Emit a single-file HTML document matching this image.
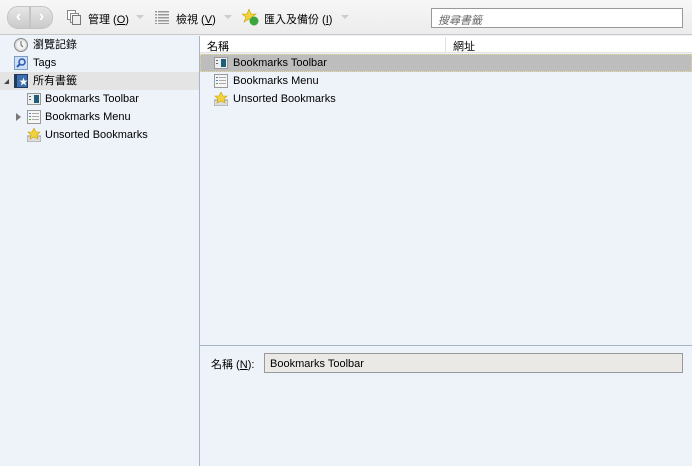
<!DOCTYPE html>
<html><head><meta charset="utf-8"><style>
*{margin:0;padding:0;box-sizing:border-box}
body{width:692px;height:466px;overflow:hidden;position:relative;font-family:"Liberation Sans","Noto Sans CJK TC",sans-serif;font-size:11px;color:#000;background:#eef3fa}
#tb{position:absolute;left:0;top:0;width:692px;height:35px;background:linear-gradient(#f7f7f7,#ececec);border-bottom:1px solid #c8c8c8}
.nav{position:absolute;top:6px;width:23px;height:23px;border:1px solid #c4c4c4;background:linear-gradient(#e6e6e6,#cacaca);color:#fff;font-weight:bold;font-size:16px;text-align:center;line-height:20px}
.tbi{position:absolute;top:11px;font-size:11px}
.dd{position:absolute;top:15px;width:0;height:0;border-left:4px solid transparent;border-right:4px solid transparent;border-top:4px solid #ccc}
#search{position:absolute;left:431px;top:8px;width:252px;height:20px;border:1px solid #999;background:#fff;font-style:italic;color:#666;padding:3px 6px;font-size:11px}
#side{position:absolute;left:0;top:36px;width:200px;height:430px;background:#eef3fa;border-right:1px solid #a9b5c6}
.row{position:absolute;height:18px;line-height:19px;white-space:nowrap}
.ic{position:absolute;top:2px;width:14px;height:14px}
#main{position:absolute;left:200px;top:36px;width:492px;height:310px;background:#eef3fa}
#hdr{position:absolute;left:0;top:0;width:492px;height:17px;background:#fff;border-bottom:1px solid #e3e3e3}
#det{position:absolute;left:200px;top:345px;width:492px;height:121px;border-top:1px solid #a9b5c6;background:#eef3fa}
u{text-decoration:underline}
</style></head><body>
<div id="tb">
<div class="nav" style="left:7px;border-radius:11px 0 0 11px">‹</div>
<div class="nav" style="left:30px;border-radius:0 11px 11px 0">›</div>
<svg style="position:absolute;left:67px;top:10px" width="14" height="15"><rect x="0.5" y="0.5" width="8" height="9" fill="#fff" stroke="#888"/><rect x="3.5" y="3.5" width="8" height="9" fill="#fff" stroke="#888"/><rect x="5.5" y="5.5" width="8" height="9" fill="#eee" stroke="#777"/></svg>
<div class="tbi" style="left:88px">管理 (<u>O</u>)</div><div class="dd" style="left:136px"></div>
<svg style="position:absolute;left:155px;top:11px" width="14" height="13"><g fill="#999"><rect x="0" y="0" width="2" height="1.5"/><rect x="3" y="0" width="11" height="1.5"/><rect x="0" y="3" width="2" height="1.5"/><rect x="3" y="3" width="11" height="1.5"/><rect x="0" y="6" width="2" height="1.5"/><rect x="3" y="6" width="11" height="1.5"/><rect x="0" y="9" width="2" height="1.5"/><rect x="3" y="9" width="11" height="1.5"/><rect x="0" y="12" width="2" height="1"/><rect x="3" y="12" width="11" height="1"/></g></svg>
<div class="tbi" style="left:176px">檢視 (<u>V</u>)</div><div class="dd" style="left:224px"></div>
<svg style="position:absolute;left:242px;top:9px" width="17" height="17"><polygon points="7,0 9,5 14,5 10,8 12,13 7,10 2,13 4,8 0,5 5,5" fill="#f2d23c" stroke="#c9a000" stroke-width=".6"/><circle cx="12" cy="12" r="4.5" fill="#3ca63c"/></svg>
<div class="tbi" style="left:264px">匯入及備份 (<u>I</u>)</div><div class="dd" style="left:341px"></div>
<div id="search">搜尋書籤</div>
</div>
<div id="side">
<div class="row" style="left:0;top:0;width:199px"><svg class="ic" style="left:14px" width="16" height="16"><circle cx="7" cy="7" r="6.5" fill="#ddd" stroke="#888"/><circle cx="7" cy="7" r="4.5" fill="#f4f4f4"/><path d="M7 3v4l2 2" stroke="#666" fill="none"/></svg><span style="position:absolute;left:33px">瀏覽記錄</span></div>
<div class="row" style="left:0;top:18px;width:199px"><svg class="ic" style="left:14px" width="14" height="14"><rect x=".5" y=".5" width="13" height="13" fill="#cfe0f5" stroke="#7c9cc8"/><circle cx="8" cy="6" r="3" fill="none" stroke="#2a5ab0" stroke-width="1.5"/><path d="M6 8l-3 3" stroke="#2a5ab0" stroke-width="2"/></svg><span style="position:absolute;left:33px">Tags</span></div>
<div class="row" style="left:0;top:36px;width:199px;background:#e4e4e4"><div style="position:absolute;left:4px;top:7px;width:0;height:0;border-left:5px solid transparent;border-bottom:5px solid #444"></div><svg class="ic" style="left:14px" width="14" height="14"><rect x="0" y="0" width="14" height="14" fill="#233a5a"/><rect x="3" y="1" width="10" height="12" fill="#3a6fb0"/><text x="5" y="11" fill="#fff" font-size="9">★</text></svg><span style="position:absolute;left:33px">所有書籤</span></div>
<div class="row" style="left:0;top:54px;width:199px"><svg class="ic" style="left:27px" width="14" height="14"><rect x=".5" y="1.5" width="13" height="11" fill="#eee" stroke="#999"/><rect x="7" y="3" width="5" height="8" fill="#1f5d7a"/><rect x="2" y="4" width="2" height="1" fill="#666"/><rect x="2" y="7" width="2" height="1" fill="#666"/></svg><span style="position:absolute;left:45px">Bookmarks Toolbar</span></div>
<div class="row" style="left:0;top:72px;width:199px"><div style="position:absolute;left:16px;top:5px;width:0;height:0;border-top:4px solid transparent;border-bottom:4px solid transparent;border-left:5px solid #777"></div><svg class="ic" style="left:27px" width="14" height="14"><rect x=".5" y=".5" width="13" height="13" fill="#f5f5f5" stroke="#999"/><g fill="#5a7ac0"><rect x="2" y="3" width="2" height="1"/><rect x="2" y="6" width="2" height="1"/><rect x="2" y="9" width="2" height="1" fill="#4a4"/></g><g fill="#aaa"><rect x="5" y="3" width="7" height="1"/><rect x="5" y="6" width="7" height="1"/><rect x="5" y="9" width="7" height="1"/></g></svg><span style="position:absolute;left:45px">Bookmarks Menu</span></div>
<div class="row" style="left:0;top:90px;width:199px"><svg class="ic" style="left:27px" width="14" height="14"><path d="M0 8h14v6H0z" fill="#ddd" stroke="#999"/><polygon points="7,0 9,4 13,4 10,7 11,11 7,9 3,11 4,7 1,4 5,4" fill="#f2d23c" stroke="#c9a000" stroke-width=".6"/></svg><span style="position:absolute;left:45px">Unsorted Bookmarks</span></div>
</div>
<div id="main">
<div id="hdr"><span style="position:absolute;left:7px;top:2px">名稱</span><div style="position:absolute;left:245px;top:1px;width:1px;height:15px;background:#e0e0e0"></div><span style="position:absolute;left:253px;top:2px">網址</span></div>
<div class="row" style="left:0;top:18px;width:492px;background:#bdbdbd;border:1px dotted #e8d89a"><svg class="ic" style="left:13px;top:1px" width="14" height="14"><rect x=".5" y="1.5" width="13" height="11" fill="#eee" stroke="#999"/><rect x="7" y="3" width="5" height="8" fill="#1f5d7a"/><rect x="2" y="4" width="2" height="1" fill="#666"/><rect x="2" y="7" width="2" height="1" fill="#666"/></svg><span style="position:absolute;left:32px;line-height:17px">Bookmarks Toolbar</span></div>
<div class="row" style="left:0;top:36px;width:492px"><svg class="ic" style="left:14px" width="14" height="14"><rect x=".5" y=".5" width="13" height="13" fill="#f5f5f5" stroke="#999"/><g fill="#5a7ac0"><rect x="2" y="3" width="2" height="1"/><rect x="2" y="6" width="2" height="1"/><rect x="2" y="9" width="2" height="1" fill="#4a4"/></g><g fill="#aaa"><rect x="5" y="3" width="7" height="1"/><rect x="5" y="6" width="7" height="1"/><rect x="5" y="9" width="7" height="1"/></g></svg><span style="position:absolute;left:33px">Bookmarks Menu</span></div>
<div class="row" style="left:0;top:54px;width:492px"><svg class="ic" style="left:14px" width="14" height="14"><path d="M0 8h14v6H0z" fill="#ddd" stroke="#999"/><polygon points="7,0 9,4 13,4 10,7 11,11 7,9 3,11 4,7 1,4 5,4" fill="#f2d23c" stroke="#c9a000" stroke-width=".6"/></svg><span style="position:absolute;left:33px">Unsorted Bookmarks</span></div>
</div>
<div id="det">
<span style="position:absolute;left:11px;top:10px">名稱 (<u>N</u>):</span>
<div style="position:absolute;left:64px;top:7px;width:419px;height:20px;border:1px solid #999;background:#ebe9e6;padding:4px 5px">Bookmarks Toolbar</div>
</div>
</body></html>
